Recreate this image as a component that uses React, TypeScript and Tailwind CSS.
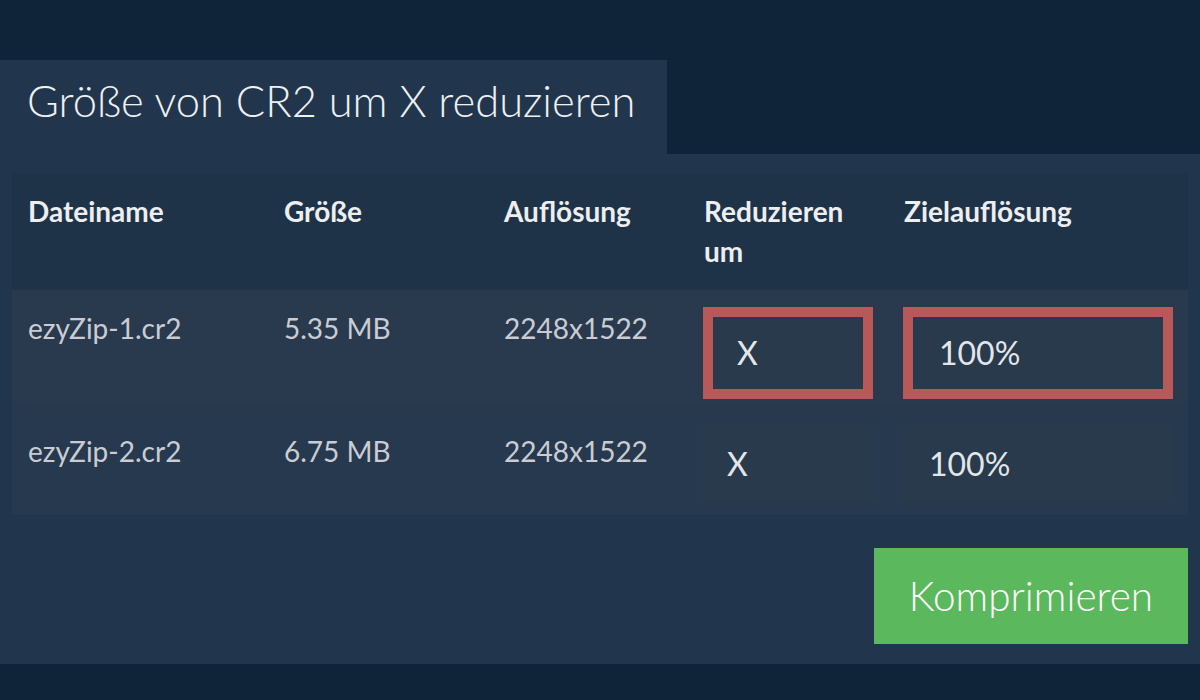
const rows = [
  { name: "ezyZip-1.cr2", size: "5.35 MB", res: "2248x1522", active: true },
  { name: "ezyZip-2.cr2", size: "6.75 MB", res: "2248x1522", active: false },
];

const cols = "grid grid-cols-[256px_220px_200px_200px_1fr]";

export default function App() {
  return (
    <div className="min-h-[700px] bg-[#0f2339] pt-[60px] font-['Lato',sans-serif]">
      {/* tab title */}
      <div className="w-[667px] h-[94px] bg-[#21364d] pl-[27px] pt-[13px]">
        <h1 className="font-['Lato_Light','Lato',sans-serif] text-[43.5px] leading-[54px] font-light text-[#eef0f2]">
          Größe von CR2 um X reduzieren
        </h1>
      </div>

      {/* panel */}
      <div className="h-[510px] bg-[#21364d] px-[12px] pt-[20px]">
        <div>
          <div className={`${cols} h-[116px] bg-[#1f3348] pl-[16px] pt-[17px] text-[28px] leading-[40px] font-bold text-[#eceef0]`}>
            <div>Dateiname</div>
            <div>Größe</div>
            <div>Auflösung</div>
            <div className="pr-[40px]">Reduzieren um</div>
            <div>Zielauflösung</div>
          </div>

          {rows.map((r, i) => (
            <div
              key={r.name}
              className={`${cols} pl-[16px] ${i === 0 ? "h-[115px] bg-[#2a3a4e] pt-[17px]" : "h-[110px] bg-[#27394f] pt-[21px]"} text-[28px] leading-[30px] text-[#c9cdd3]`}
            >
              <div className={i === 0 ? "pt-[6px]" : "pt-[10px]"}>{r.name}</div>
              <div className={i === 0 ? "pt-[6px]" : "pt-[10px]"}>{r.size}</div>
              <div className={i === 0 ? "pt-[6px]" : "pt-[10px]"}>{r.res}</div>
              <div className="-ml-[1px]">
                <div
                  className={`w-[170px] flex items-center text-[32px] text-[#e3e6e9] bg-[#283a4c] ${
                    r.active ? "h-[92px] border-[10px] border-[#b85859] pl-[24px]" : "h-[75px] pl-[24px]"
                  }`}
                >
                  X
                </div>
              </div>
              <div className="-ml-[1px]">
                <div
                  className={`w-[270px] flex items-center text-[32px] text-[#e3e6e9] bg-[#283a4c] ${
                    r.active ? "h-[92px] border-[10px] border-[#b85859] pl-[26px]" : "h-[75px] pl-[26px]"
                  }`}
                >
                  100%
                </div>
              </div>
            </div>
          ))}
        </div>

        <div className="flex justify-end pt-[33px]">
          <button className="w-[314px] h-[96px] bg-[#5cb85c] text-white font-['Lato_Light','Lato',sans-serif] text-[40.5px] font-light">
            Komprimieren
          </button>
        </div>
      </div>
    </div>
  );
}
